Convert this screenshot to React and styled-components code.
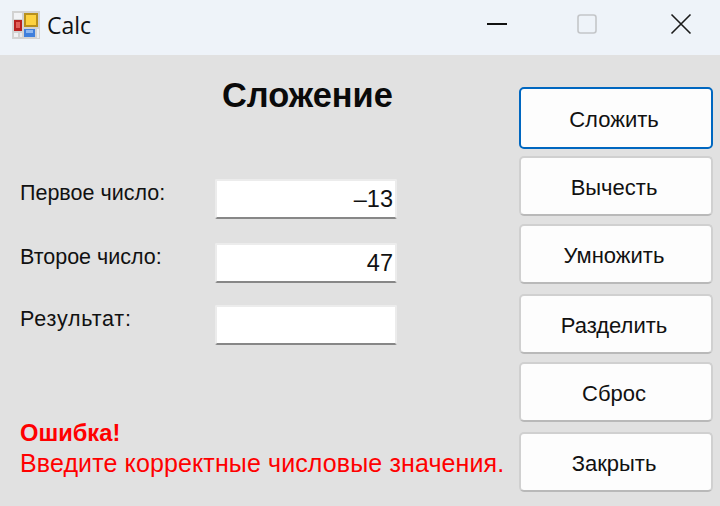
import React from 'react';
import styled, { createGlobalStyle } from 'styled-components';

const Global = createGlobalStyle`
  html, body { margin: 0; padding: 0; background: #e1e1e1; }
  body { font-family: "Liberation Sans", Arial, sans-serif; }
`;

const Win = styled.div`
  width: 720px; height: 506px; display: flex; flex-direction: column; overflow: hidden; background: #e1e1e1;
`;
const TitleBar = styled.div`
  height: 55px; flex: none; box-sizing: border-box; display: flex; align-items: center;
  background: #eef3f9; padding: 0 0 6px 12px;
`;
const AppName = styled.span`
  margin: 2px 0 0 7px; font-family: "Open Sans", sans-serif; font-size: 23px; color: #111; line-height: 1;
`;
const WinButtons = styled.div`
  margin-left: auto; display: flex; align-items: center;
`;
const WinBtn = styled.div`
  width: 92px; height: 49px; display: flex; align-items: center; justify-content: center;
  position: relative; left: ${p => p.$dx || 0}px; top: -1px;
`;
const Body = styled.div`
  flex: 1; display: flex; padding: 32px 7px 14px 20px;
`;
const Left = styled.div`
  flex: 1; display: flex; flex-direction: column; min-width: 0;
`;
const Heading = styled.h1`
  margin: 0 0 0 202px; font-size: 34.4px; font-weight: 700; line-height: 16px; height: 16px; color: #0a0a0a;
  white-space: nowrap;
`;
const Form = styled.div`
  margin-top: 76px; display: flex; flex-direction: column;
`;
const Row = styled.div`
  display: flex; align-items: flex-start; margin-top: ${p => p.$mt || 0}px;
`;
const Label = styled.label`
  width: 195px; font-size: 21.5px; color: #111; line-height: 24px; margin-top: 2px; white-space: nowrap;
  letter-spacing: ${p => p.$ls || 0}px;
`;
const Field = styled.div`
  width: 176px; height: 34px; padding: 2px 2px 0 0; background: #fff;
  border: 2px solid #ececec; border-bottom: 2px solid #878787; border-radius: 2px;
  display: flex; align-items: center; justify-content: flex-end;
  font-size: 23.5px; color: #111; line-height: 1;
`;
const Messages = styled.div`
  margin-top: 75px; display: flex; flex-direction: column;
`;
const ErrTitle = styled.div`
  font-size: 23.7px; font-weight: 700; color: #ff0000; line-height: 26px;
`;
const ErrText = styled.div`
  font-size: 25px; color: #ff0000; line-height: 34px; white-space: nowrap; letter-spacing: 0.12px;
`;
const Right = styled.div`
  width: 194px; flex: none; display: flex; flex-direction: column;
`;
const Btn = styled.button`
  width: 194px; height: ${p => p.$h || 60}px; flex: none; margin-top: ${p => p.$mt || 0}px; box-sizing: border-box;
  background: #fdfdfd; color: #111; font-family: inherit; font-size: 22px; padding: 3px 4px 0 0;
  border: ${p => p.$active ? '2px solid #0067c0' : '2px solid #d0d0d0'};
  border-bottom: ${p => p.$active ? '2px solid #0067c0' : '2px solid #b9b9b9'};
  border-radius: 5px;
`;
const IconSvg = styled.svg`
  flex: none; filter: blur(0.5px);
`;

const Icon = () => (
  <IconSvg width="28" height="28" viewBox="0 0 28 28">
    <rect x="0" y="0" width="28" height="28" fill="#d2d2d2" />
    <rect x="2" y="2" width="8" height="6" fill="#f2f3f6" />
    <rect x="2" y="9" width="8" height="11" fill="#b8211f" />
    <rect x="4" y="11" width="4" height="6" fill="#e0605a" />
    <rect x="2" y="22" width="4" height="4" fill="#f0f1f4" />
    <rect x="8" y="22" width="2" height="4" fill="#e8e9ec" />
    <rect x="12" y="2" width="14" height="14" fill="#b8901c" />
    <rect x="14" y="4" width="10" height="10" fill="#fdd23f" />
    <rect x="12" y="18" width="11" height="8" fill="#3f7fdc" />
    <rect x="14" y="19" width="7" height="3" fill="#8fb8f0" />
    <rect x="25" y="18" width="2" height="9" fill="#ebedf0" />
  </IconSvg>
);

export default function App() {
  return (
    <Win>
      <Global />
      <TitleBar>
        <Icon />
        <AppName>Calc</AppName>
        <WinButtons>
          <WinBtn $dx={7}>
            <svg width="22" height="22" viewBox="0 0 22 22"><path d="M1 11h20" stroke="#111" strokeWidth="2" /></svg>
          </WinBtn>
          <WinBtn $dx={5}>
            <svg width="20" height="20" viewBox="0 0 20 20"><rect x="1" y="1" width="18" height="18" rx="2.5" fill="none" stroke="#c4c6c9" strokeWidth="1.6" /></svg>
          </WinBtn>
          <WinBtn $dx={7}>
            <svg width="22" height="22" viewBox="0 0 22 22"><path d="M1.5 1.5l19 19M20.5 1.5l-19 19" stroke="#1a1a1a" strokeWidth="1.6" fill="none" /></svg>
          </WinBtn>
        </WinButtons>
      </TitleBar>
      <Body>
        <Left>
          <Heading>Сложение</Heading>
          <Form>
            <Row><Label>Первое число:</Label><Field>–13</Field></Row>
            <Row $mt={24}><Label>Второе число:</Label><Field>47</Field></Row>
            <Row $mt={22}><Label $ls={0.8}>Результат:</Label><Field /></Row>
          </Form>
          <Messages>
            <ErrTitle>Ошибка!</ErrTitle>
            <ErrText>Введите корректные числовые значения.</ErrText>
          </Messages>
        </Left>
        <Right>
          <Btn $active $h={62}>Сложить</Btn>
          <Btn $mt={7}>Вычесть</Btn>
          <Btn $mt={8}>Умножить</Btn>
          <Btn $mt={10}>Разделить</Btn>
          <Btn $mt={8}>Сброс</Btn>
          <Btn $mt={10}>Закрыть</Btn>
        </Right>
      </Body>
    </Win>
  );
}
